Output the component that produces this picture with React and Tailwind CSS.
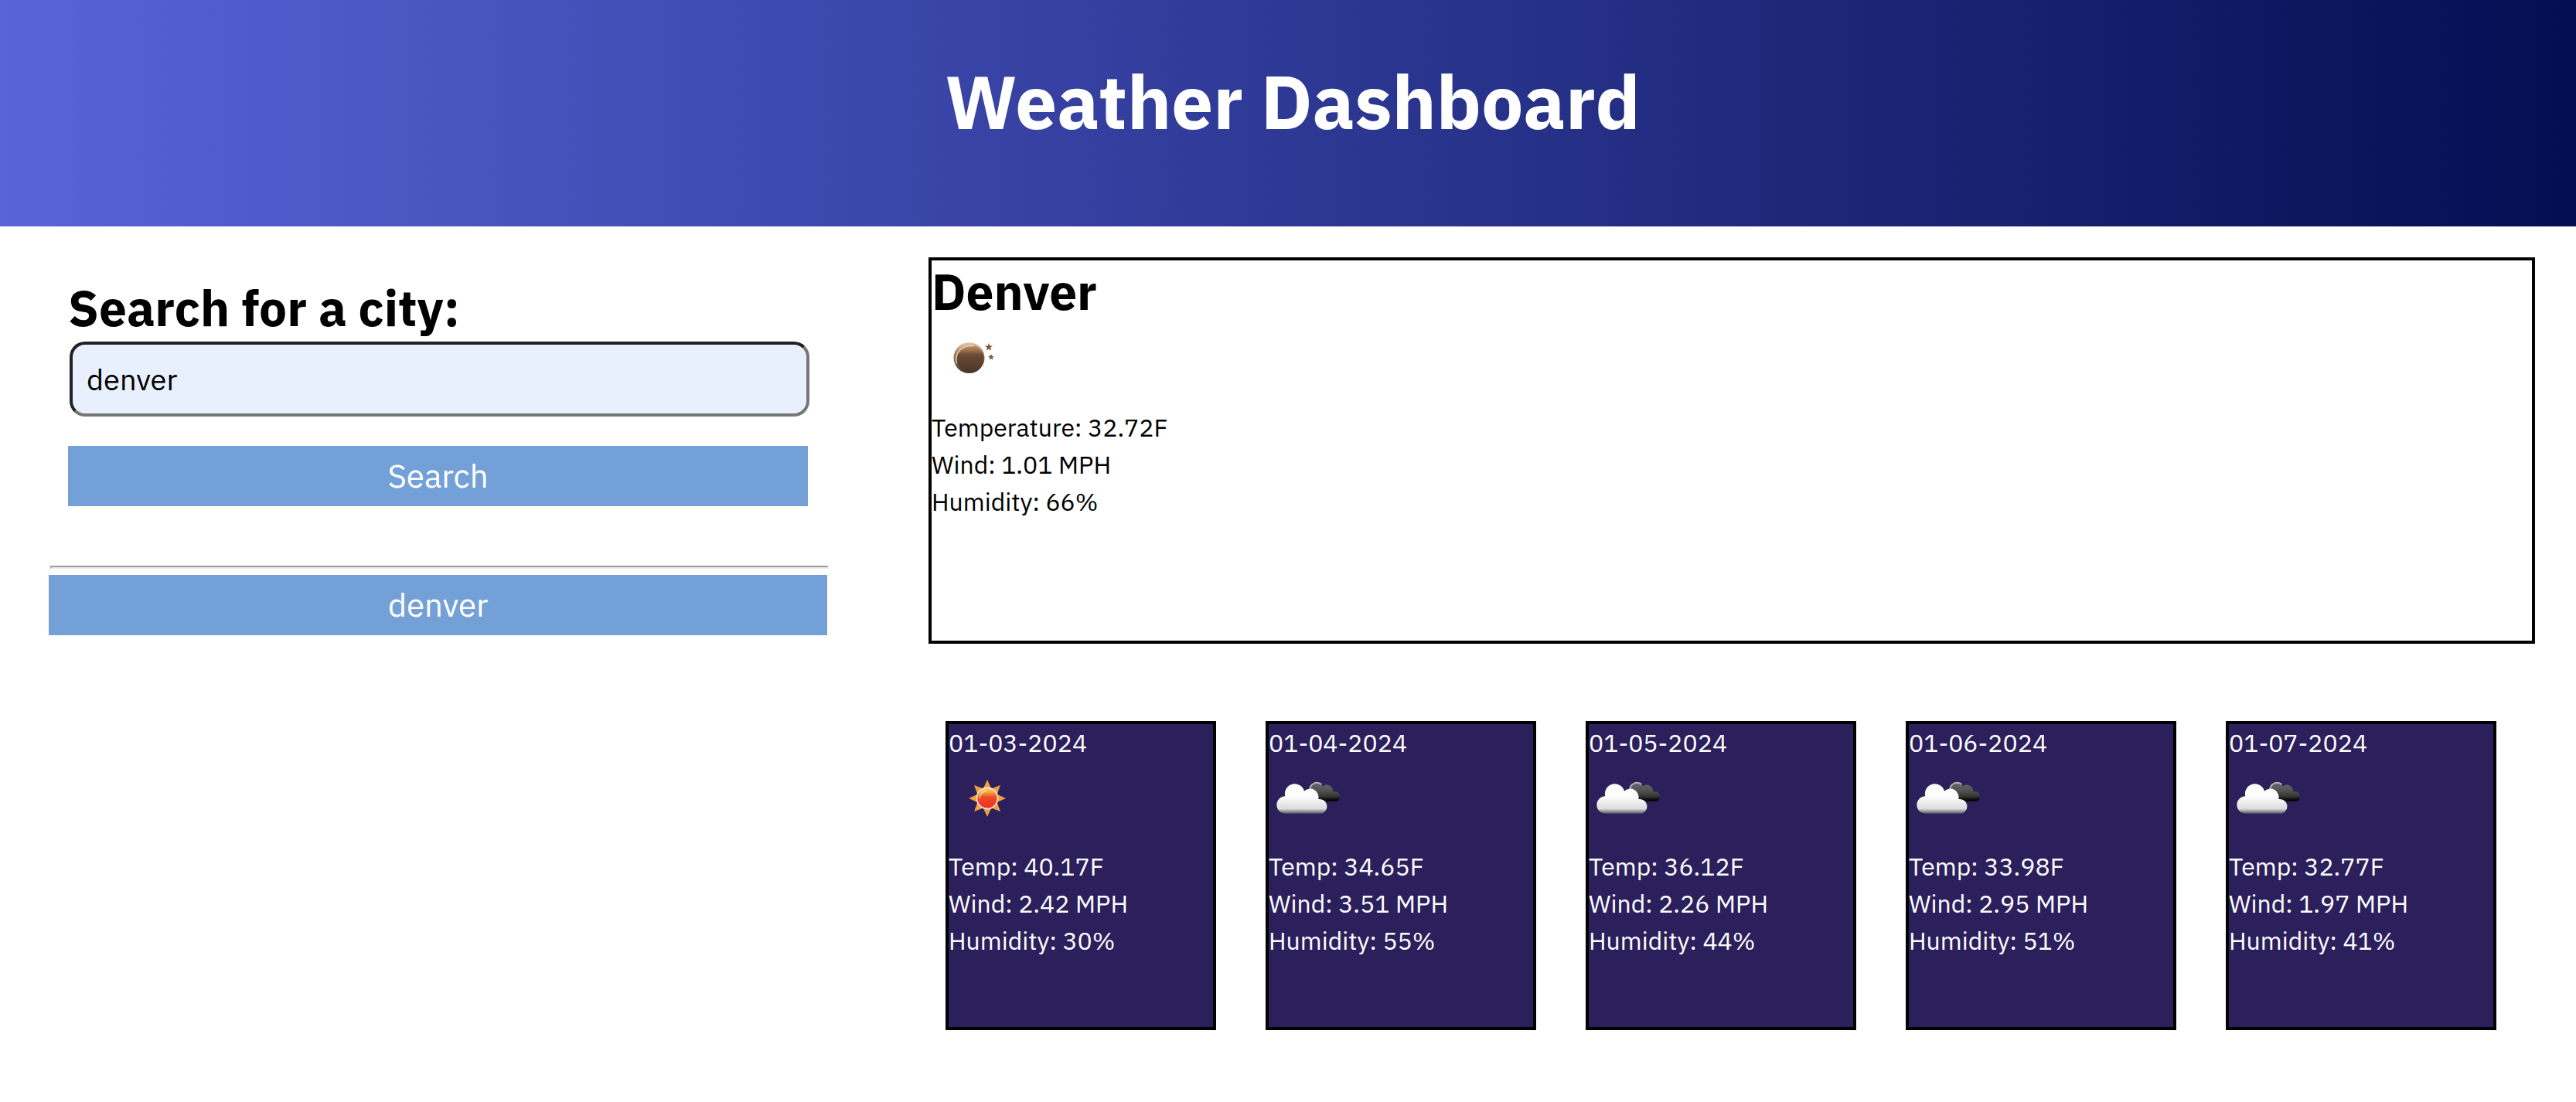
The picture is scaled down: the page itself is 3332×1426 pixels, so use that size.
import { useState } from "react";

const forecast = [
  { date: "01-03-2024", icon: "sun", temp: "40.17", wind: "2.42", humidity: 30 },
  { date: "01-04-2024", icon: "clouds", temp: "34.65", wind: "3.51", humidity: 55 },
  { date: "01-05-2024", icon: "clouds", temp: "36.12", wind: "2.26", humidity: 44 },
  { date: "01-06-2024", icon: "clouds", temp: "33.98", wind: "2.95", humidity: 51 },
  { date: "01-07-2024", icon: "clouds", temp: "32.77", wind: "1.97", humidity: 41 },
];

const STAR = "M0 -5 L1.4 -1.6 L5 -1.5 L2.2 0.8 L3.1 4.4 L0 2.4 L-3.1 4.4 L-2.2 0.8 L-5 -1.5 L-1.4 -1.6 Z";

function Moon() {
  return (
    <svg viewBox="0 0 100 112" className="block h-28 w-[100px]" role="img" aria-label="Clear night">
      <defs>
        <linearGradient id="moonRim" x1="0" y1="0" x2="0" y2="1">
          <stop offset="0" stopColor="#e8c9b0" />
          <stop offset="0.35" stopColor="#a5805f" />
          <stop offset="1" stopColor="#4a3427" />
        </linearGradient>
        <linearGradient id="moonBody" x1="0" y1="0" x2="0" y2="1">
          <stop offset="0" stopColor="#c49468" />
          <stop offset="0.2" stopColor="#9c7049" />
          <stop offset="0.36" stopColor="#6b4c35" />
          <stop offset="1" stopColor="#4b3628" />
        </linearGradient>
      </defs>
      <circle cx="48.5" cy="46" r="20" fill="url(#moonRim)" />
      <circle cx="50" cy="47" r="17.5" fill="url(#moonBody)" />
      <path d="M32 53 C30 38 40 29.5 54 30.5" fill="none" stroke="#f3e0d2" strokeWidth="1.6" strokeLinecap="round" opacity="0.8" />
      <path d={STAR} transform="translate(74 32)" fill="#7a563c" />
      <path d={STAR} transform="translate(77 45) scale(0.8)" fill="#7a563c" />
    </svg>
  );
}

function Sun() {
  return (
    <svg viewBox="0 0 100 112" className="block h-28 w-[100px]" role="img" aria-label="Sunny">
      <defs>
        <linearGradient id="sunBody" x1="0" y1="0" x2="0" y2="1">
          <stop offset="0" stopColor="#fbd05a" />
          <stop offset="0.22" stopColor="#f6a13a" />
          <stop offset="0.45" stopColor="#ee4a28" />
          <stop offset="1" stopColor="#ea3122" />
        </linearGradient>
      </defs>
      <g transform="translate(50 48)">
        {[0, 45, 90, 135, 180, 225, 270, 315].map((a) => (
          <path key={a} d="M-5.5 -12 L0 -24 L5.5 -12 Z" transform={`rotate(${a})`} fill="#f2a03d" />
        ))}
        <circle r="13.5" fill="url(#sunBody)" stroke="#f6dcd2" strokeWidth="1.8" />
        <path d="M-10 -1 A10.5 10.5 0 0 1 -1 -10" fill="none" stroke="#fdeb8c" strokeWidth="2" strokeLinecap="round" opacity="0.7" />
      </g>
    </svg>
  );
}

function Clouds() {
  return (
    <svg viewBox="0 0 100 112" className="block h-28 w-[100px]" role="img" aria-label="Broken clouds">
      <defs>
        <linearGradient id="cloudDark" gradientUnits="userSpaceOnUse" x1="0" y1="62" x2="0" y2="142">
          <stop offset="0" stopColor="#6e6e6e" />
          <stop offset="0.5" stopColor="#4f4f4f" />
          <stop offset="0.75" stopColor="#333333" />
          <stop offset="0.92" stopColor="#060606" />
          <stop offset="1" stopColor="#0b0a14" />
        </linearGradient>
        <linearGradient id="cloudLight" gradientUnits="userSpaceOnUse" x1="0" y1="73" x2="0" y2="188">
          <stop offset="0" stopColor="#ffffff" />
          <stop offset="0.45" stopColor="#fbfbfb" />
          <stop offset="0.84" stopColor="#dcdcdc" />
          <stop offset="0.93" stopColor="#939393" />
          <stop offset="1" stopColor="#5c5a70" />
        </linearGradient>
      </defs>
      <g transform="translate(0 5) scale(0.3333)">
        <path
          d="M157 100 A29 29 0 0 1 210 82 A25 25 0 0 1 250 104 A20 20 0 0 1 264 142 L185 142 Z"
          fill="url(#cloudDark)"
        />
        <path d="M160 92 A27 27 0 0 1 203 74" fill="none" stroke="#b4b4b4" strokeWidth="6" strokeLinecap="round" />
        <path
          d="M65 188 A33 33 0 0 1 64 121 A38 38 0 0 1 138 101 A33 33 0 0 1 193 132 A29 29 0 0 1 207 188 Z"
          fill="url(#cloudLight)"
        />
      </g>
    </svg>
  );
}

const icons = { sun: Sun, clouds: Clouds };

function DayCard({ day }) {
  const Icon = icons[day.icon];
  return (
    <article className="min-h-[400px] border-4 border-black bg-[#2b205c] text-white">
      <h3>{day.date}</h3>
      <Icon />
      <p>Temp: {day.temp}F</p>
      <p>Wind: {day.wind} MPH</p>
      <p>Humidity: {day.humidity}%</p>
    </article>
  );
}

export default function App() {
  const [city, setCity] = useState("denver");
  return (
    <div className="min-h-screen bg-white font-['IBM_Plex_Sans','Liberation_Sans',sans-serif] text-[32px] leading-[48px] text-black">
      <header className="bg-linear-to-r/srgb from-[#5864d8] to-[#040e52] pt-[59px] pb-[90px] pl-3">
        <h1 className="text-center text-[96px] leading-[144px] font-bold text-white">Weather Dashboard</h1>
      </header>

      <main className="grid grid-cols-[1009fr_2078fr] gap-[129px] pt-10 pr-[53px] pl-[63px]">
        <aside className="pt-[23px]">
          <form className="px-[25px]" onSubmit={(e) => e.preventDefault()}>
            <label htmlFor="city" className="block text-[64px] leading-[84px] font-bold">
              Search for a city:
            </label>
            <div className="mt-0.5 pl-0.5">
              <input
                id="city"
                type="text"
                value={city}
                onChange={(e) => setCity(e.target.value)}
                className="block h-[97px] w-full rounded-[20px] border-4 border-t-[#212121] border-r-[#767676] border-b-[#767676] border-l-[#212121] bg-[#e8f0fe] px-[18px] text-[38px] outline-none"
              />
            </div>
            <div className="mt-[38px] pr-0.5">
              <button type="submit" className="block h-[78px] w-full bg-[#74a0d8] text-[42px] text-white">
                Search
              </button>
            </div>
          </form>
          <hr className="mt-[77px] ml-0.5 h-1 border-2 border-t-[#9a9a9a] border-r-[#eeeeee] border-b-[#eeeeee] border-l-[#9a9a9a]" />
          <div className="mt-2 pr-0.5">
            <button type="button" className="block h-[78px] w-full bg-[#74a0d8] text-[42px] text-white">
              denver
            </button>
          </div>
        </aside>

        <div>
          <section className="min-h-[500px] border-4 border-black">
            <h2 className="text-[64px] leading-[80px] font-bold">Denver</h2>
            <Moon />
            <p>Temperature: 32.72F</p>
            <p>Wind: 1.01 MPH</p>
            <p>Humidity: 66%</p>
          </section>
          <section className="mt-[100px] grid grid-cols-5 gap-16 pr-[50px] pl-[22px]">
            {forecast.map((day) => (
              <DayCard key={day.date} day={day} />
            ))}
          </section>
        </div>
      </main>
    </div>
  );
}
